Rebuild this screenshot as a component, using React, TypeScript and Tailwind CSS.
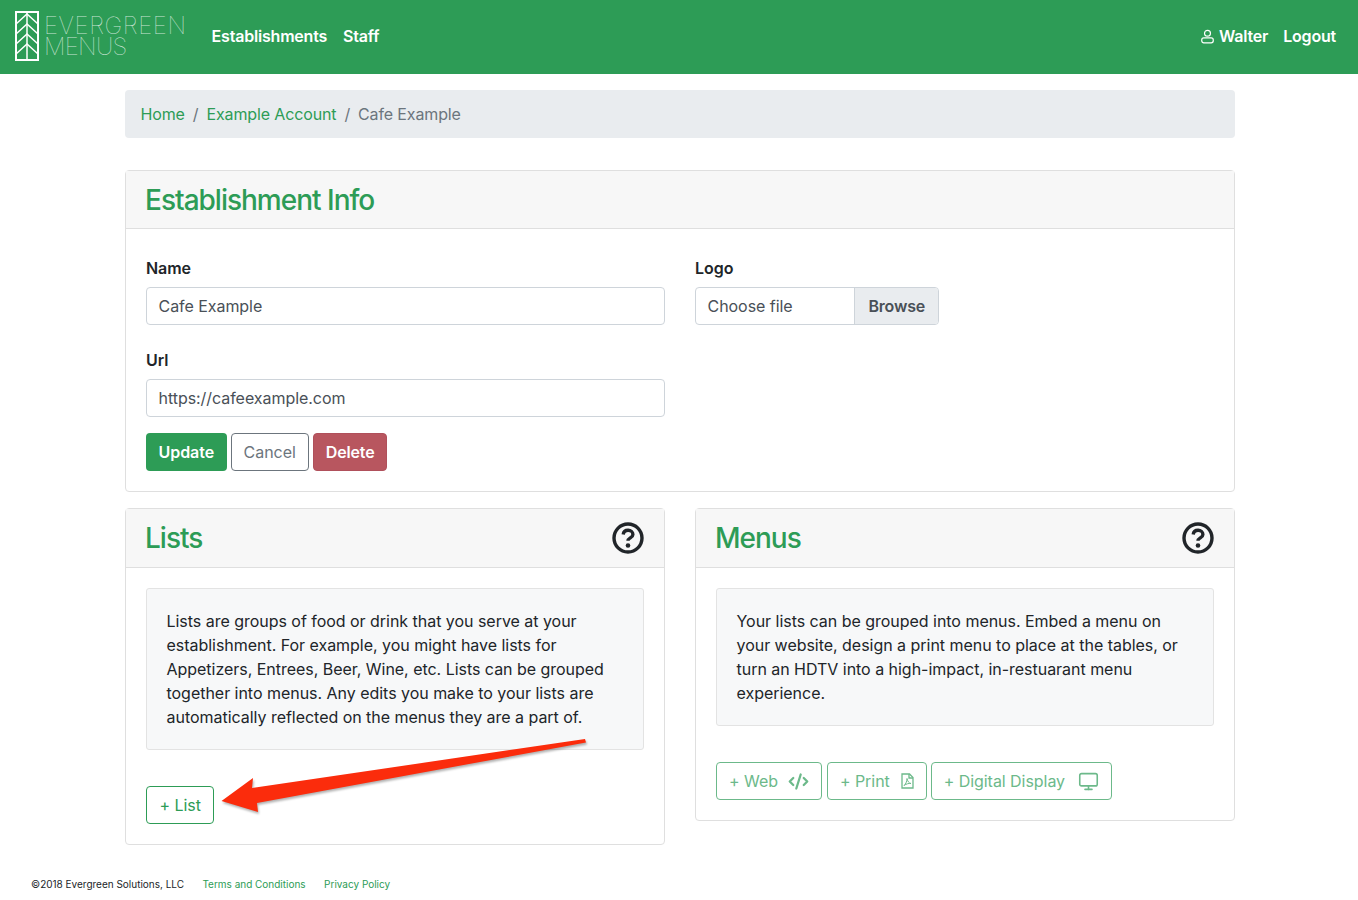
import { Code2, Monitor } from 'lucide-react';

const inter = "font-['Inter',sans-serif]";

function Logo() {
  return (
    <div className="flex items-center gap-[5px]">
      <svg width="24" height="50" viewBox="0 0 24 50" fill="none" stroke="#fff" strokeWidth="1.5">
        <rect x="1" y="1" width="22" height="48" strokeWidth="2" />
        <path d="M12 1V49" />
        <path d="M1 13L12 3L23 13M1 23L12 13L23 23M1 33L12 23L23 33M1 43L12 33L23 43" />
      </svg>
      <div className="font-['Inter',sans-serif] text-[24px] leading-[21px] font-thin tracking-[0.6px] text-white/75">
        <div>EVERGREEN</div>
        <div className="tracking-[-0.7px]">MENUS</div>
      </div>
    </div>
  );
}

function Help() {
  return (
    <svg width="32" height="32" viewBox="0 0 32 32" fill="none" className="-mt-px -mr-px -translate-x-px text-[#212529]">
      <circle cx="16" cy="16" r="14" stroke="currentColor" strokeWidth="3.400" />
      <path d="M11.2 12.500c.3-2.700 2.300-4.200 4.900-4.200 2.700 0 4.800 1.700 4.800 4.100 0 3.500-4.900 3.400-4.900 6.400" stroke="currentColor" strokeWidth="3.400" />
      <circle cx="16" cy="23.500" r="2.300" fill="currentColor" />
    </svg>
  );
}

function UserIcon() {
  return (
    <svg width="13" height="15" viewBox="0 0 14 15" fill="none" stroke="currentColor" strokeWidth="1.300">
      <circle cx="7" cy="4" r="3.200" />
      <rect x="0.800" y="9" width="12.400" height="5.300" rx="2.200" />
    </svg>
  );
}

function PdfIcon() {
  return (
    <svg width="13" height="16" viewBox="0 0 13 16" fill="none" stroke="currentColor" strokeWidth="1.300">
      <path d="M1 1H8.500L12 4.500V15H1Z" />
      <path d="M8 1V5H12" />
      <path d="M6 5.500C6 8.500 4.500 11.500 3 12.500C5 11 8 10 10 10.500C8 10.500 6.500 8 6 5.500Z" strokeWidth="1" />
    </svg>
  );
}

function Card({ title, help, children }: { title: string; help?: boolean; children: React.ReactNode }) {
  return (
    <section className="rounded border border-[#dfdfdf] bg-white">
      <div className={`flex items-center justify-between border-b border-[#dfdfdf] bg-[#f7f7f7] px-5 ${help ? 'h-[59px]' : 'h-[58px]'}`}>
        <h2 className="-ml-px text-[28px] font-medium tracking-[-1px] text-[#2d9c56]">{title}</h2>
        {help && <Help />}
      </div>
      <div className="p-5">{children}</div>
    </section>
  );
}

function Field({ label, value }: { label: string; value: string }) {
  return (
    <div className="mb-[23px]">
      <label className="mb-[7px] block leading-6 font-semibold text-[#212529]">{label}</label>
      <div className="flex h-[38px] items-center rounded border border-[#ced4da] bg-white px-[11.500px] text-[#495057]">{value}</div>
    </div>
  );
}

function Well({ children }: { children: React.ReactNode }) {
  return <div className="rounded-[3px] border border-[#e3e3e3] bg-[#f7f8f9] py-5 pr-5 pl-[19.500px] leading-6 tracking-[-0.03px] text-[#212529]">{children}</div>;
}

export default function App() {
  return (
    <div className={`relative min-h-[900px] bg-white text-base tracking-[-0.05px] ${inter}`}>
      <header className="flex h-[74px] items-center justify-between bg-[#2d9c56] pr-[22px] pb-[2px] pl-[15px] font-semibold text-white">
        <div className="flex items-center">
          <Logo />
          <nav className="ml-[25px] flex gap-4 tracking-[-0.2px]">
            <a>Establishments</a>
            <a>Staff</a>
          </nav>
        </div>
        <div className="flex items-center gap-[15px] tracking-[-0.2px]">
          <a className="flex items-center gap-[5px]">
            <UserIcon />
            Walter
          </a>
          <a>Logout</a>
        </div>
      </header>

      <main className="mx-auto w-[1110px] translate-x-px pt-4">
        <nav className="flex h-12 items-center gap-2 rounded bg-[#e9ecef] pr-4 pl-[15.500px] tracking-[-0.13px] text-[#6c757d]">
          <a className="text-[#2d9c56]">Home</a>
          <span>/</span>
          <a className="text-[#2d9c56]">Example Account</a>
          <span>/</span>
          <span>Cafe Example</span>
        </nav>

        <div className="mt-8">
          <Card title="Establishment Info">
            <div className="grid grid-cols-2 gap-x-[30px] pt-[7px]">
              <div>
                <Field label="Name" value="Cafe Example" />
                <div className="-mb-[7px]">
                  <Field label="Url" value="https://cafeexample.com" />
                </div>
                <div className="flex gap-1">
                  <button className="h-[38px] rounded bg-[#2d9c56] px-[12.500px] font-semibold text-white">Update</button>
                  <button className="h-[38px] rounded border border-[#6c757d] px-3 text-[#6c757d]">Cancel</button>
                  <button className="h-[38px] rounded border border-[#b0505b] bg-[#b8565f] px-3 font-semibold tracking-[-0.15px] text-white">Delete</button>
                </div>
              </div>
              <div>
                <label className="mb-[7px] block leading-6 font-semibold text-[#212529]">Logo</label>
                <div className="flex h-[38px] w-[244px] items-stretch overflow-hidden rounded border border-[#ced4da] text-[#495057]">
                  <div className="flex flex-1 items-center px-[11.500px]">Choose file</div>
                  <div className="flex items-center border-l border-[#ced4da] bg-[#e9ecef] px-[13px] font-semibold tracking-[-0.2px]">Browse</div>
                </div>
              </div>
            </div>
          </Card>
        </div>

        <div className="mt-4 grid grid-cols-2 items-start gap-x-[30px]">
          <Card title="Lists" help>
            <Well>
              Lists are groups of food or drink that you serve at your establishment. For example, you might have lists for Appetizers, Entrees, Beer, Wine, etc. Lists can be grouped together into menus. Any edits you make to your lists are automatically reflected on the menus they are a part of.
            </Well>
            <button className="mt-9 h-[38px] rounded border border-[#2d9c56] px-[12.500px] text-[#2d9c56]">+ List</button>
          </Card>
          <Card title="Menus" help>
            <Well>
              Your lists can be grouped into menus. Embed a menu on your website, design a print menu to place at the tables, or turn an HDTV into a high-impact, in-restuarant menu experience.
            </Well>
            <div className="mt-9 flex gap-[5px] text-[#6cb98a]">
              <button className="flex h-[38px] items-center gap-[10px] rounded border border-[#6cb98a] px-3">
                + Web <Code2 size={21} strokeWidth={2.6} />
              </button>
              <button className="flex h-[38px] items-center gap-[11px] rounded border border-[#6cb98a] px-3">
                + Print <PdfIcon />
              </button>
              <button className="-ml-px flex h-[38px] items-center gap-[13px] rounded border border-[#6cb98a] px-3">
                + Digital Display <Monitor size={21} strokeWidth={1.8} />
              </button>
            </div>
          </Card>
        </div>
      </main>

      <footer className="mt-[32px] flex gap-[18.500px] pl-[31px] text-[10px] leading-[15px] tracking-[-0.01px] text-[#212529]">
        <span>©2018 Evergreen Solutions, LLC</span>
        <a className="text-[#2d9c56]">Terms and Conditions</a>
        <a className="text-[#2d9c56]">Privacy Policy</a>
      </footer>

      <svg width="380" height="90" viewBox="0 0 380 90" className="absolute top-[732px] left-[215px] drop-shadow-[1px_2px_1px_rgba(0,0,0,0.3)]">
        <path d="M6.500 69L38 46L37 56L370 7L371 10.500L42 71L43 80Z" fill="#fb2c0c" />
      </svg>
    </div>
  );
}
